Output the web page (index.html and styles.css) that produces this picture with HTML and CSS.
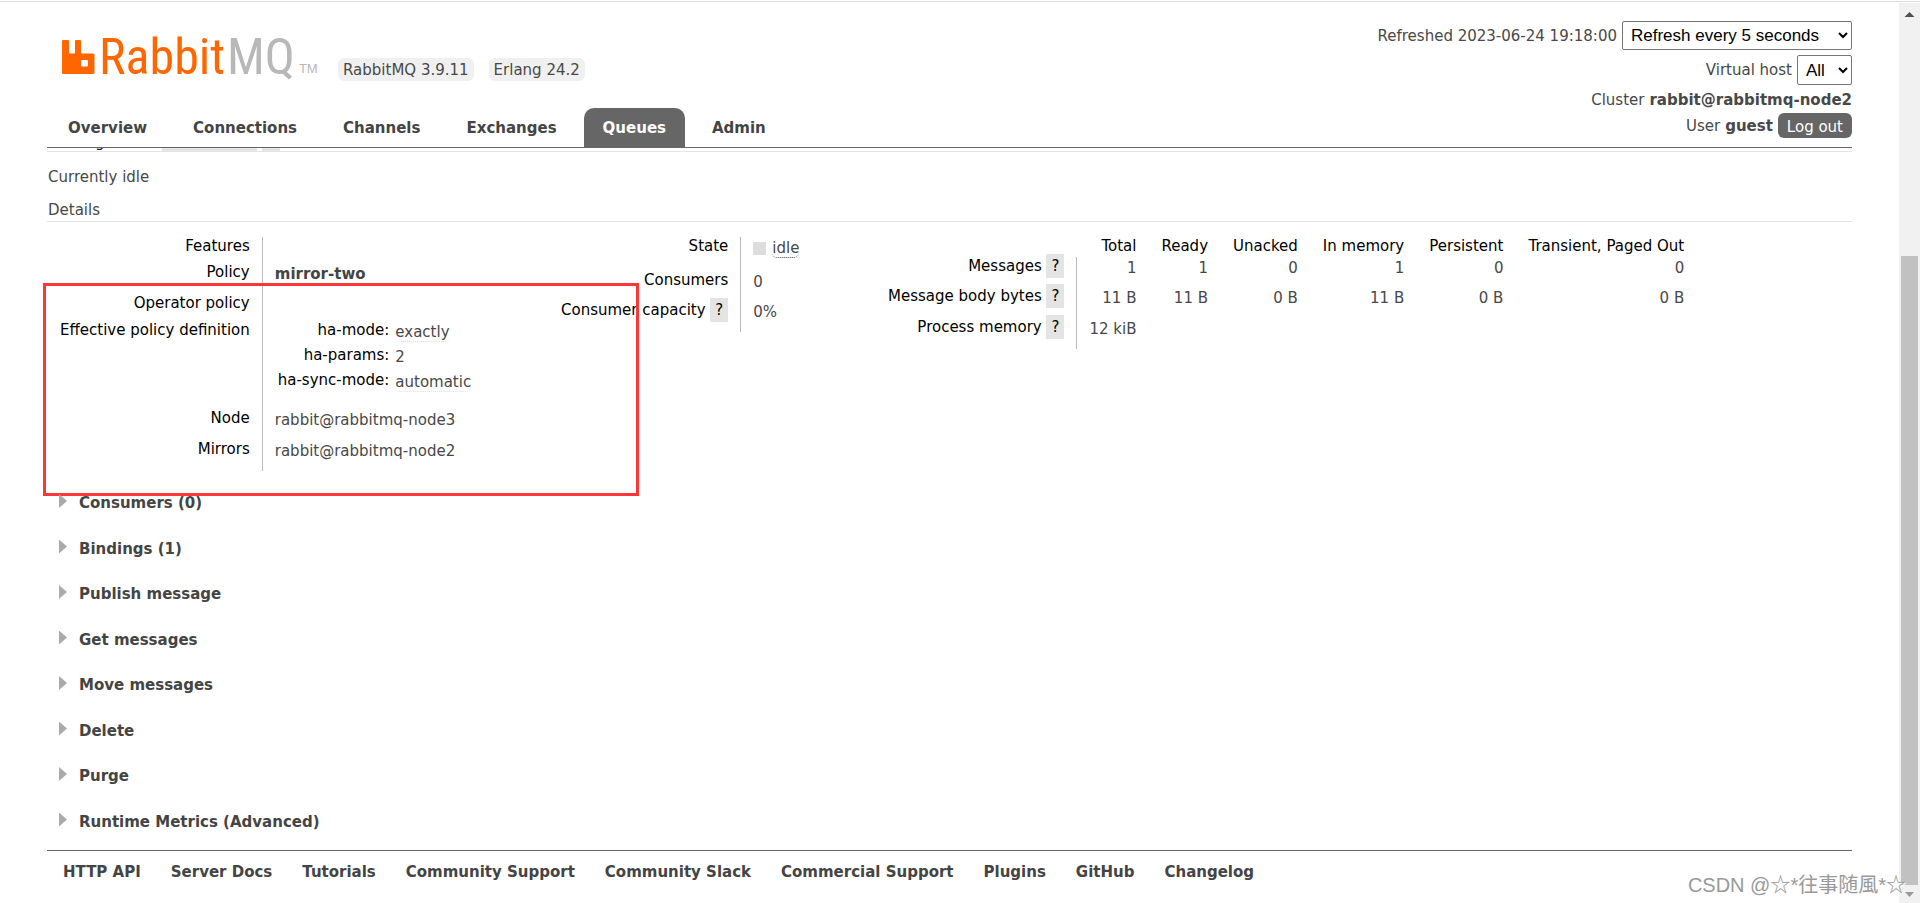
FILE: index.html
```html
<!DOCTYPE html>
<html lang="en">
<head>
<meta charset="utf-8">
<title>RabbitMQ Management</title>
<link rel="stylesheet" href="styles.css">
</head>
<body>
<div class="page">
  <header class="header">
    <div class="header-left">
      <div class="brand">
        <a class="logo" href="#">
          <svg class="logo-mark" width="33" height="34" viewBox="0 0 33 34" aria-hidden="true"><path fill="#f60" fill-rule="evenodd" d="M1 0H6Q7 0 7 1V12.500Q7 13.500 8 13.500H12Q13 13.500 13 12.500V1Q13 0 14 0H18Q19 0 19 1V12.500Q19 13.500 20 13.500H31Q32.500 13.500 32.500 15V32.500Q32.500 34 31 34H1.500Q0 34 0 32.500V1Q0 0 1 0ZM20 20Q19 20 19 21V25.500Q19 26.500 20 26.500H25Q26 26.500 26 25.500V21Q26 20 25 20Z"/></svg>
          <span class="logo-text">Rabbit<span class="logo-grey">MQ</span></span><span class="logo-tm">TM</span>
        </a>
        <span class="badge">RabbitMQ 3.9.11</span>
        <span class="badge">Erlang 24.2</span>
      </div>
      <nav class="tabs">
        <a href="#">Overview</a>
        <a href="#">Connections</a>
        <a href="#">Channels</a>
        <a href="#">Exchanges</a>
        <a href="#" class="selected">Queues</a>
        <a href="#">Admin</a>
      </nav>
    </div>
    <div class="status">
      <div class="status-row refresh"><label for="refresh">Refreshed 2023-06-24 19:18:00</label><select id="refresh"><option>Refresh every 5 seconds</option></select></div>
      <div class="status-row vhost"><label for="vhost">Virtual host</label><select id="vhost"><option>All</option></select></div>
      <div class="status-row cluster"><span>Cluster</span><b>rabbit@rabbitmq-node2</b></div>
      <div class="status-row"><span>User</span><b>guest</b><button type="button" class="logout">Log out</button></div>
    </div>
  </header>

  <main>
    <div class="rates"><span>Message rates</span><span class="rates-tag">last minute</span><span class="rates-tag">?</span></div>
    <p class="idle-note">Currently idle</p>
    <h2 class="details-title">Details</h2>
    <div class="details">
      <table class="facts">
        <tr class="h26"><th>Features</th><td></td></tr>
        <tr class="h31"><th>Policy</th><td><a href="#" class="policy">mirror-two</a></td></tr>
        <tr class="h27"><th>Operator policy</th><td></td></tr>
        <tr class="h88"><th>Effective policy definition</th><td class="nested">
          <table class="mini">
            <tr><th>ha-mode:</th><td><abbr>exactly</abbr></td></tr>
            <tr><th>ha-params:</th><td><abbr>2</abbr></td></tr>
            <tr><th>ha-sync-mode:</th><td><abbr>automatic</abbr></td></tr>
          </table></td></tr>
        <tr class="h31"><th>Node</th><td>rabbit@rabbitmq-node3</td></tr>
        <tr class="h31"><th>Mirrors</th><td>rabbit@rabbitmq-node2</td></tr>
      </table>
      <table class="facts">
        <tr class="h34"><th>State</th><td><span class="state"><i class="swatch"></i><abbr class="dark">idle</abbr></span></td></tr>
        <tr class="h30"><th>Consumers</th><td>0</td></tr>
        <tr class="h31"><th>Consumer capacity <span class="help">?</span></th><td>0%</td></tr>
      </table>
      <table class="facts counts">
        <tr class="head"><td></td><th>Total</th><th>Ready</th><th>Unacked</th><th>In memory</th><th>Persistent</th><th>Transient, Paged Out</th></tr>
        <tr class="h30"><th>Messages <span class="help">?</span></th><td>1</td><td>1</td><td>0</td><td>1</td><td>0</td><td>0</td></tr>
        <tr class="h31"><th>Message body bytes <span class="help">?</span></th><td>11 B</td><td>11 B</td><td>0 B</td><td>11 B</td><td>0 B</td><td>0 B</td></tr>
        <tr class="h31"><th>Process memory <span class="help">?</span></th><td>12 kiB</td><td></td><td></td><td></td><td></td><td></td></tr>
      </table>
      <div class="highlight"></div>
    </div>
    <div class="sections">
      <button type="button">Consumers (0)</button>
      <button type="button">Bindings (1)</button>
      <button type="button">Publish message</button>
      <button type="button">Get messages</button>
      <button type="button">Move messages</button>
      <button type="button">Delete</button>
      <button type="button">Purge</button>
      <button type="button">Runtime Metrics (Advanced)</button>
    </div>
  </main>
  <footer class="footer">
    <a href="#">HTTP API</a>
    <a href="#">Server Docs</a>
    <a href="#">Tutorials</a>
    <a href="#">Community Support</a>
    <a href="#">Community Slack</a>
    <a href="#">Commercial Support</a>
    <a href="#">Plugins</a>
    <a href="#">GitHub</a>
    <a href="#">Changelog</a>
  </footer>
</div>
<div class="scrollbar" aria-hidden="true">
  <svg width="21" height="18" viewBox="0 0 21 18"><path d="M5.500 14L10.500 9L15.500 14Z" fill="#505050"/></svg>
  <div class="track-space"></div>
  <div class="thumb"></div>
  <svg width="21" height="18" viewBox="0 0 21 18"><path d="M6 7H15L10.500 12Z" fill="#999"/></svg>
</div>
<div class="watermark">CSDN @☆*往事随風*☆</div>
</body>
</html>
```
FILE: styles.css
```css
* { box-sizing: border-box; }
body {
  margin: 0;
  min-height: 100vh;
  display: flex;
  border-top: 1px solid #fff;
  background: linear-gradient(#dadce0, #dadce0) 0 1px / 100% 1px no-repeat #fff;
  padding-top: 2px;
  font: 15px/18px "DejaVu Sans", Verdana, sans-serif;
  color: #484848;
}
a { color: #444; text-decoration: none; }
.page { flex: 1; padding: 0 47px; }

.header {
  display: flex;
  justify-content: space-between;
  border-bottom: 1px solid #666;
}
.header-left { display: flex; flex-direction: column; justify-content: space-between; }
.brand { display: flex; align-items: flex-end; gap: 15px; padding: 33px 0 0 15px; height: 78px; }
.logo { display: flex; align-items: flex-end; width: 261px; height: 45px; padding-bottom: 7px; color: #f60; }
.logo-mark { flex: none; margin-right: 4px; }
.logo-text { font: 400 50px/34px "Roboto Condensed", "Liberation Sans Narrow", Roboto, sans-serif; }
.logo-grey { color: #b8b8b8; margin-left: 2px; }
.logo-tm { font: 13px/11px "Liberation Sans", Arial, sans-serif; color: #b8b8b8; margin-left: 4px; }
.badge { background: #f0f0f0; border-radius: 6px; padding: 3px 5px 2px; }
.tabs { display: flex; gap: 8px; margin-left: 2px; font-weight: bold; }
.tabs a { padding: 11px 19px 10px; border-radius: 10px 10px 0 0; }
.tabs .selected { background: #666; color: #fff; }

.status { padding: 18px 0 9px; }
.status-row { display: flex; justify-content: flex-end; align-items: center; gap: 5px; }
.refresh { margin-bottom: 5px; }
.cluster { height: 28px; padding-top: 2px; }
.status select {
  height: 29px;
  padding: 0 4px;
  border: 1px solid #767676;
  border-radius: 2px;
  background: #fff;
  color: #000;
  font: 17px "Liberation Sans", Arial, sans-serif;
}
.status .vhost select { width: 55px; height: 30px; }
.refresh select { width: 230px; }
.logout {
  height: 25px;
  padding: 2px 9px 0;
  border: 0;
  border-radius: 6px;
  background: #666;
  color: #fff;
  font: 15px/18px "DejaVu Sans", Verdana, sans-serif;
}

.rates {
  display: flex;
  align-items: flex-end;
  gap: 5px;
  height: 4px;
  overflow: hidden;
  padding-left: 1px;
  border-bottom: 1px solid #e4e4e4;
  color: #222;
}
.rates-tag { background: #e4e4e4; padding: 3px 5px; }
.idle-note { margin: 16px 0 15px 1px; }
.details-title { margin: 0; padding: 0 0 2px 1px; font-size: 15px; font-weight: normal; border-bottom: 1px solid #e4e4e4; }
.details {
  position: relative;
  display: grid;
  grid-template-columns: 501px 327px 1fr;
  align-items: start;
  justify-items: start;
  padding-top: 15px;
}
table { border-collapse: collapse; }
th { font-weight: normal; color: #000; }
th, td { vertical-align: top; white-space: nowrap; padding: 0; }
.facts > tbody > tr > th { text-align: right; padding: 0 12px 0 13px; }
.facts > tbody > tr > th:first-child { border-right: 1px solid #bbb; }
.facts > tbody > tr > td { padding: 2px 12px 0; }
.facts > tbody > tr > td.nested { padding-top: 0; }
.counts > tbody > tr > td { text-align: right; }
.head { height: 20px; }
.h26 { height: 26px; }
.h27 { height: 27px; }
.h30 { height: 30px; }
.h31 { height: 31px; }
.h34 { height: 34px; }
.h88 { height: 88px; }
.mini tr { height: 25px; }
.mini th { text-align: right; padding: 0 3px; }
.mini td { padding: 2px 3px 0; }
.policy { font-weight: bold; }
abbr { border-bottom: 1px dotted #ddd; border-radius: 5px; }
abbr.dark { border-color: #444; }
.state { display: flex; align-items: center; gap: 6px; }
.swatch { width: 13px; height: 13px; background: #ddd; }
.help { background: #e4e4e4; padding: 3px 5px; }
.highlight {
  position: absolute;
  left: -4px;
  top: 61px;
  width: 596px;
  height: 213px;
  border: 3px solid #ff3636;
}

.sections { display: grid; grid-auto-rows: 1fr; height: 364px; margin-top: 15px; padding-left: 12px; }
.sections button {
  display: flex;
  align-items: flex-start;
  justify-content: flex-start;
  gap: 12px;
  padding: 8px 0 0;
  border: 0;
  background: none;
  color: #444;
  font: bold 15px/18px "DejaVu Sans", Verdana, sans-serif;
}
.sections button::before {
  content: "";
  width: 8px;
  height: 14px;
  background: #aaa;
  clip-path: polygon(0 0, 100% 50%, 0 100%);
}

.footer { display: flex; gap: 30px; padding: 12px 16px; border-top: 1px solid #666; font-weight: bold; }

.scrollbar { flex: none; width: 21px; display: flex; flex-direction: column; background: #f1f1f1; }
.track-space { flex: 235; }
.thumb { flex: 628; margin: 0 2px; background: #c1c1c1; }
.watermark {
  position: absolute;
  right: 14px;
  bottom: 5px;
  font: 20px/26px "Liberation Sans", "Noto Sans CJK SC", sans-serif;
  color: #999;
  text-shadow: 1px 1px 0 #fff;
}
```
